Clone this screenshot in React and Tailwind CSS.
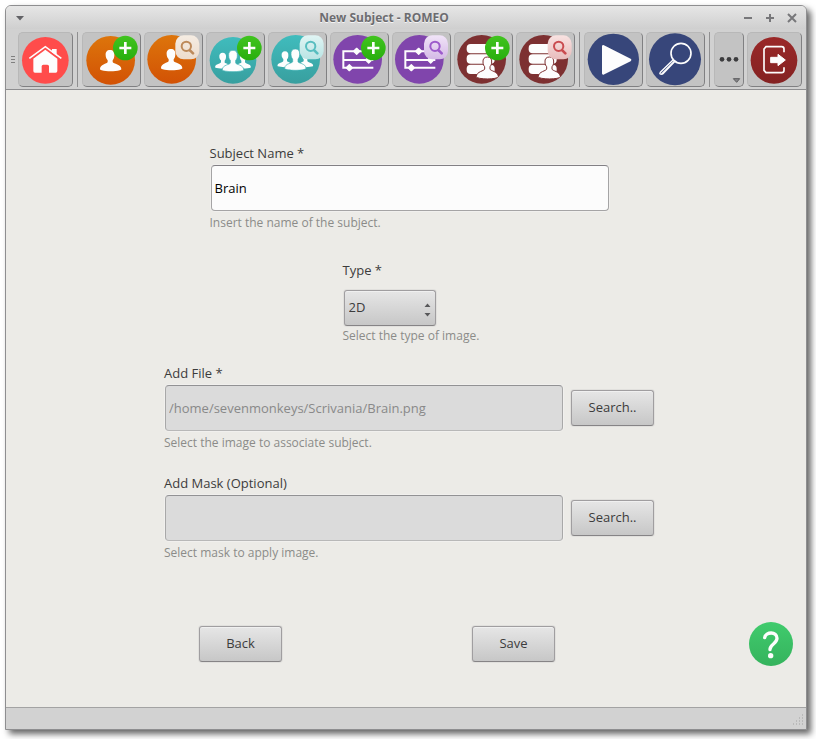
import React from "react";

const WHITE = "#fdfdfd";

function ToolButton({ label, viewBox, size = "w-[59px]", children }) {
  return (
    <button
      type="button"
      aria-label={label}
      className={`${size} h-[55px] shrink-0 rounded-[5px] border border-t-[#b8b8b8] border-l-[#b8b8b8] border-r-[#808082] border-b-[#808082] bg-[#c3c3c3]`}
    >
      <svg viewBox={viewBox} className="-m-px block h-[55px] w-[calc(100%+2px)]" aria-hidden="true">
        {children}
      </svg>
    </button>
  );
}

function Separator() {
  return <div className="mx-px h-[55px] w-px shrink-0 bg-[#8f8f90]" />;
}

function PlusBadge({ x }) {
  return (
    <g>
      <circle cx={x} cy="144" r="37" fill="url(#green)" />
      <path d={`M${x - 18} 144h36M${x} 126v36`} stroke={WHITE} strokeWidth="8" fill="none" />
    </g>
  );
}

function SearchBadge({ x, fill, stroke }) {
  return (
    <g>
      <rect x={x - 36} y="106" width="72" height="72" rx="25" fill={`url(#${fill})`} />
      <circle cx={x - 3} cy="139" r="14" fill="none" stroke={stroke} strokeWidth="6" />
      <path d={`M${x + 8} 151l9 9`} stroke={stroke} strokeWidth="8" strokeLinecap="round" />
    </g>
  );
}

function Person({ x, y }) {
  return (
    <path
      transform={`translate(${x} ${y})`}
      d="M-2-32c9 0 14 6 13 16 0 7-2 12-5 15v5c2 6 26 7 26 21 0 2-2 3-5 4-14 4-40 4-54 0-3-1-5-2-5-4 0-14 21-15 23-21v-5c-3-3-6-8-6-15-1-10 4-16 13-16z"
      fill={WHITE}
    />
  );
}

function Group({ x, y }) {
  return (
    <g transform={`translate(${x} ${y})`} fill={WHITE}>
      <path d="M-31-24c7 0 11 5 10 13 0 6-2 9-4 11v6l9 4v12c-14 3-29 1-37-1-4-11 17-11 17-17v-5c-3-3-5-6-5-11-1-7 3-12 10-12z" />
      <path d="M31-24c-7 0-11 5-10 13 0 6 2 9 4 11v6l-9 4v12c14 3 29 1 37-1 4-11-17-11-17-17v-5c3-3 5-6 5-11 1-7-3-12-10-12z" />
      <path
        d="M0-31c9 0 14 6 13 16 0 8-3 12-5 14v8c0 5 24 5 24 20 0 8-64 8-64 0 0-15 24-15 24-20v-8c-2-2-5-6-5-14-1-10 4-16 13-16z"
        stroke="#3bb0b2"
        strokeWidth="2"
      />
    </g>
  );
}

function Tree({ x }) {
  return (
    <g transform={`translate(${x} 0)`}>
      <path d="M130 154H40v49h90M40 180h90" fill="none" stroke={WHITE} strokeWidth="6" />
      <path
        d="M80 145l9 9-9 9-9-9zM116 171l9 9-9 9-9-9zM58 194l9 9-9 9-9-9z"
        fill={WHITE}
        stroke={WHITE}
        strokeWidth="4"
        strokeLinejoin="round"
      />
    </g>
  );
}

function Database({ x }) {
  return (
    <g transform={`translate(${x} 0)`}>
      <rect x="38" y="132" width="84" height="28" rx="12" fill={WHITE} />
      <rect x="38" y="163" width="84" height="28" rx="12" fill={WHITE} />
      <rect x="38" y="194" width="84" height="28" rx="12" fill={WHITE} />
      <path
        d="M100 171c9 0 14 6 13 15 0 8-3 12-5 14v7c0 6 25 7 25 23 0 9-66 9-66 0 0-16 25-17 25-23v-7c-2-2-5-6-5-14-1-9 4-15 13-15z"
        fill={WHITE}
        stroke="#7d3031"
        strokeWidth="3"
      />
    </g>
  );
}

function Gradients() {
  const list = [
    ["green", "#41c41f", "#28ae0e"],
    ["orange", "#dd750b", "#d25205"],
    ["teal", "#40bcbd", "#389f9f"],
    ["crimson", "#9a2828", "#842222"],
    ["cream", "#f5ece2", "#eddccd"],
    ["aqua", "#e0f5f4", "#b9e4e4"],
    ["lilac", "#f1e4f8", "#d4b9e6"],
    ["rose", "#f9e2e1", "#e8bcbc"],
    ["help", "#40cb6d", "#35b35d"],
  ];
  return (
    <svg className="absolute h-0 w-0" aria-hidden="true">
      <defs>
        {list.map(([id, from, to]) => (
          <linearGradient key={id} id={id} x1="0" y1="0" x2="0" y2="1">
            <stop offset="0" stopColor={from} />
            <stop offset="1" stopColor={to} />
          </linearGradient>
        ))}
      </defs>
    </svg>
  );
}

function TitleBar() {
  const control = "flex h-[22px] w-[22px] items-center justify-center";
  return (
    <header className="flex h-[23px] items-center bg-linear-to-b from-[#e6e6e6] to-[#cfcfcf] pr-[3px] pl-[3px] text-[#77777a]">
      <button type="button" aria-label="Window menu" className={control}>
        <svg width="10" height="6" viewBox="0 0 10 6" aria-hidden="true">
          <path d="M1 1h8L5 5.500z" fill="#626266" />
        </svg>
      </button>
      <h1 className="flex-1 text-center text-[12px] leading-5 font-bold text-[#6c6c70] [text-shadow:0_1px_0_#f4f4f4]">
        New Subject - ROMEO
      </h1>
      <button type="button" aria-label="Minimize" className={control}>
        <svg width="10" height="10" viewBox="0 0 10 10" aria-hidden="true">
          <path d="M1 5h8" stroke="currentColor" strokeWidth="2" />
        </svg>
      </button>
      <button type="button" aria-label="Maximize" className={control}>
        <svg width="10" height="10" viewBox="0 0 10 10" aria-hidden="true">
          <path d="M1 5h8M5 1v8" stroke="currentColor" strokeWidth="2" />
        </svg>
      </button>
      <button type="button" aria-label="Close" className={control}>
        <svg width="10" height="10" viewBox="0 0 10 10" aria-hidden="true">
          <path d="M1 1l8 8M9 1L1 9" stroke="currentColor" strokeWidth="2" />
        </svg>
      </button>
    </header>
  );
}

function ToolBar() {
  return (
    <nav aria-label="Main" className="flex items-start gap-[3px] border-b border-[#8e8e90] bg-[#d1d1d1] pt-[3px] pr-1 pb-0.5 pl-[5px]">
      <div className="flex h-[55px] w-1 shrink-0 flex-col justify-center gap-0.5">
        <span className="h-px bg-[#808080]" />
        <span className="h-px bg-[#808080]" />
        <span className="h-px bg-[#808080]" />
      </div>
      <ToolButton label="Home" size="w-[55px]" viewBox="54 96 165 165">
        <circle cx="136" cy="181" r="70" fill="#ff4c4b" />
        <path d="M88 175l48-35 48 35" fill="none" stroke={WHITE} strokeWidth="5" />
        <path d="M156 147h14v20l-14-10z" fill={WHITE} />
        <path
          d="M136 149l36 27v37q0 5-5 5h-20v-19q0-5-5-5h-12q-5 0-5 5v19h-20q-5 0-5-5v-37z"
          fill={WHITE}
        />
      </ToolButton>
      <Separator />
      <ToolButton label="Add subject" viewBox="246 96 177 165">
        <circle cx="332" cy="181" r="73" fill="url(#orange)" />
        <Person x={332} y={182} />
        <PlusBadge x={376} />
      </ToolButton>
      <ToolButton label="Search subject" viewBox="432 96 177 165">
        <circle cx="515" cy="178" r="73" fill="url(#orange)" />
        <Person x={515} y={179} />
        <SearchBadge x={562} fill="cream" stroke="#bd8a5b" />
      </ToolButton>
      <ToolButton label="Add group" viewBox="18 96 177 165">
        <circle cx="99" cy="181" r="70" fill="url(#teal)" />
        <Group x={99} y={182} />
        <PlusBadge x={148} />
      </ToolButton>
      <ToolButton label="Search group" viewBox="204 96 177 165">
        <circle cx="287" cy="178" r="73" fill="url(#teal)" />
        <Group x={286} y={178} />
        <SearchBadge x={335} fill="aqua" stroke="#58bec0" />
      </ToolButton>
      <ToolButton label="Add protocol" viewBox="390 96 177 165">
        <circle cx="473" cy="178" r="73" fill="#8045ac" />
        <Tree x={390} />
        <PlusBadge x={520} />
      </ToolButton>
      <ToolButton label="Search protocol" viewBox="6 96 177 165">
        <circle cx="88" cy="178" r="73" fill="#8045ac" />
        <Tree x={6} />
        <SearchBadge x={138} fill="lilac" stroke="#9c5bcb" />
      </ToolButton>
      <ToolButton label="Add dataset" viewBox="192 96 177 165">
        <circle cx="275" cy="178" r="73" fill="#7d3031" />
        <Database x={192} />
        <PlusBadge x={322} />
      </ToolButton>
      <ToolButton label="Search dataset" viewBox="378 96 177 165">
        <circle cx="461" cy="178" r="73" fill="#7d3031" />
        <Database x={378} />
        <SearchBadge x={509} fill="rose" stroke="#ca4c50" />
      </ToolButton>
      <Separator />
      <ToolButton label="Run analysis" viewBox="24 96 177 165">
        <circle cx="112" cy="178" r="77" fill="#37467a" />
        <path d="M82 139l80 41-80 40z" fill={WHITE} stroke={WHITE} strokeWidth="8" strokeLinejoin="round" />
      </ToolButton>
      <ToolButton label="View results" viewBox="210 96 177 165">
        <circle cx="297" cy="178" r="78" fill="#37467a" />
        <g fill="none" stroke={WHITE} strokeWidth="5" strokeLinejoin="round">
          <circle cx="315" cy="160" r="30" />
          <path d="M291 180l-38 37q-3 5 0 5 5 2 8-1l36-37M295 184l-38 38" strokeWidth="4" strokeLinecap="round" />
        </g>
      </ToolButton>
      <Separator />
      <ToolButton label="More" size="w-[30px]" viewBox="414 96 90 165">
        <g fill="#3c3c3e">
          <circle cx="438" cy="178" r="7" />
          <circle cx="459" cy="178" r="7" />
          <circle cx="480" cy="178" r="7" />
        </g>
        <path d="M472 236h19l-9 11z" fill="#858588" stroke="#5c5c5e" strokeWidth="3" />
      </ToolButton>
      <ToolButton label="Exit" size="w-[55px]" viewBox="513 96 165 165">
        <circle cx="594" cy="181" r="70" fill="url(#crimson)" />
        <path
          d="M624 157v-10q0-7-7-7h-47l-6 7v64l6 7h47q7 0 7-7v-9"
          fill="none"
          stroke={WHITE}
          strokeWidth="5"
        />
        <path d="M584 172h22v-9l22 17-22 17v-9h-22z" fill={WHITE} stroke={WHITE} strokeWidth="3" strokeLinejoin="round" />
      </ToolButton>
    </nav>
  );
}

function FormButton({ children }) {
  return (
    <button
      type="button"
      className="h-9 w-[83px] shrink-0 rounded-[3px] border border-[#a09ea0] border-b-[#868486] bg-linear-to-b from-[#e6e6e6] to-[#c7c7c7] text-[13px] text-[#3c3c3c] shadow-[inset_0_1px_0_#f0f0f0,0_0_0_1px_#e1e0dd]"
    >
      {children}
    </button>
  );
}

const labelClass = "block text-[13px] leading-5 text-[#3c3c3c]";
const hintClass = "text-[12px] leading-5 whitespace-nowrap text-[#8b8b89]";
const inputClass =
  "block h-[46px] w-full min-w-0 rounded-[4px] border px-[3px] text-[13px] leading-5 outline-none shadow-[0_0_0_1px_#f1f0ee]";
const disabledClass = "border-t-[#929294] border-x-[#a8a8a8] border-b-[#b8b8b8] bg-[#dbdbdb] text-[#898989]";

function FileField({ id, label, hint, value }) {
  return (
    <div>
      <label htmlFor={id} className={labelClass}>
        {label}
      </label>
      <div className="flex items-center gap-2 py-0.5 pl-px">
        <input id={id} type="text" readOnly value={value} aria-describedby={`${id}-hint`} className={`${inputClass} ${disabledClass}`} />
        <FormButton>Search..</FormButton>
      </div>
      <p id={`${id}-hint`} className={hintClass}>
        {hint}
      </p>
    </div>
  );
}

export default function App() {
  return (
    <div className="flex min-h-screen bg-white pt-[5px] pr-[9px] pb-[9px] pl-[5px] font-['Open_Sans','Noto_Sans',sans-serif]">
      <Gradients />
      <div className="flex min-w-0 flex-1 flex-col overflow-hidden rounded-t-[6px] border border-[#8e8e90] bg-[#ecebe7] shadow-[4px_4px_6px_0_rgba(0,0,0,0.6)]">
        <TitleBar />
        <ToolBar />
        <main className="flex flex-1 flex-col pt-[53px]">
          <div className="pl-1.5">
            <form className="mx-auto w-[490px]">
              <div className="mx-auto w-[399px]">
                <label htmlFor="name" className={labelClass}>
                  Subject Name *
                </label>
                <div className="py-0.5 pl-px">
                  <input
                    id="name"
                    type="text"
                    defaultValue="Brain"
                    aria-describedby="name-hint"
                    className={`${inputClass} border-[#a5a4a5] border-t-[#828084] bg-[#fcfcfc] text-black`}
                  />
                </div>
                <p id="name-hint" className={hintClass}>
                  Insert the name of the subject.
                </p>
              </div>
              <div className="mx-auto mt-[27px] w-[133px]">
                <label htmlFor="type" className={labelClass}>
                  Type *
                </label>
                <div className="relative mt-[10px] ml-px w-[92px]">
                  <select
                    id="type"
                    aria-describedby="type-hint"
                    className="block h-9 w-full appearance-none rounded-[3px] border border-[#a09ea0] border-b-[#868486] bg-linear-to-b from-[#e6e6e6] to-[#c7c7c7] px-1 text-[13px] text-[#3c3c3c] shadow-[inset_0_1px_0_#f0f0f0,0_0_0_1px_#e1e0dd]"
                  >
                    <option>2D</option>
                    <option>3D</option>
                  </select>
                  <svg className="pointer-events-none absolute top-[13px] right-[5px]" width="7" height="14" viewBox="0 0 7 14" aria-hidden="true">
                    <path d="M0.500 4h6l-3-3.500zM0.500 10h6l-3 3.500z" fill="#58585a" />
                  </svg>
                </div>
                <p id="type-hint" className={hintClass}>
                  Select the type of image.
                </p>
              </div>
              <div className="mt-[17px] flex flex-col gap-5">
                <FileField id="file" label="Add File *" hint="Select the image to associate subject." value="/home/sevenmonkeys/Scrivania/Brain.png" />
                <FileField id="mask" label="Add Mask (Optional)" hint="Select mask to apply image." value="" />
              </div>
            </form>
          </div>
          <div className="mt-auto grid grid-cols-[1fr_1fr_143px] items-center pr-[13px] pb-[41px] pl-[98px]">
            <div className="flex justify-center">
              <FormButton>Back</FormButton>
            </div>
            <div className="flex justify-center">
              <FormButton>Save</FormButton>
            </div>
            <button type="button" aria-label="Help" className="h-11 w-11 justify-self-end rounded-full">
              <svg viewBox="146 65 132 132" className="block h-11 w-11" aria-hidden="true">
                <circle cx="212" cy="131" r="66" fill="url(#help)" />
                <path
                  d="M193 112c3-18 37-20 37 2 0 17-22 17-21 34"
                  fill="none"
                  stroke={WHITE}
                  strokeWidth="10"
                  strokeLinecap="round"
                />
                <circle cx="211" cy="166" r="8" fill={WHITE} />
              </svg>
            </button>
          </div>
        </main>
        <footer className="flex h-[22px] items-end justify-end border-t border-[#a3a3a3] bg-[#d2d2d2] pr-0.5 pb-[3px]">
          <svg width="12" height="12" viewBox="0 0 12 12" aria-hidden="true">
            <path d="M10 1h1M7 4h1M10 4h1M4 7h1M7 7h1M10 7h1M1 10h1M4 10h1M7 10h1M10 10h1" stroke="#a2a2a2" strokeWidth="1" />
          </svg>
        </footer>
      </div>
    </div>
  );
}
